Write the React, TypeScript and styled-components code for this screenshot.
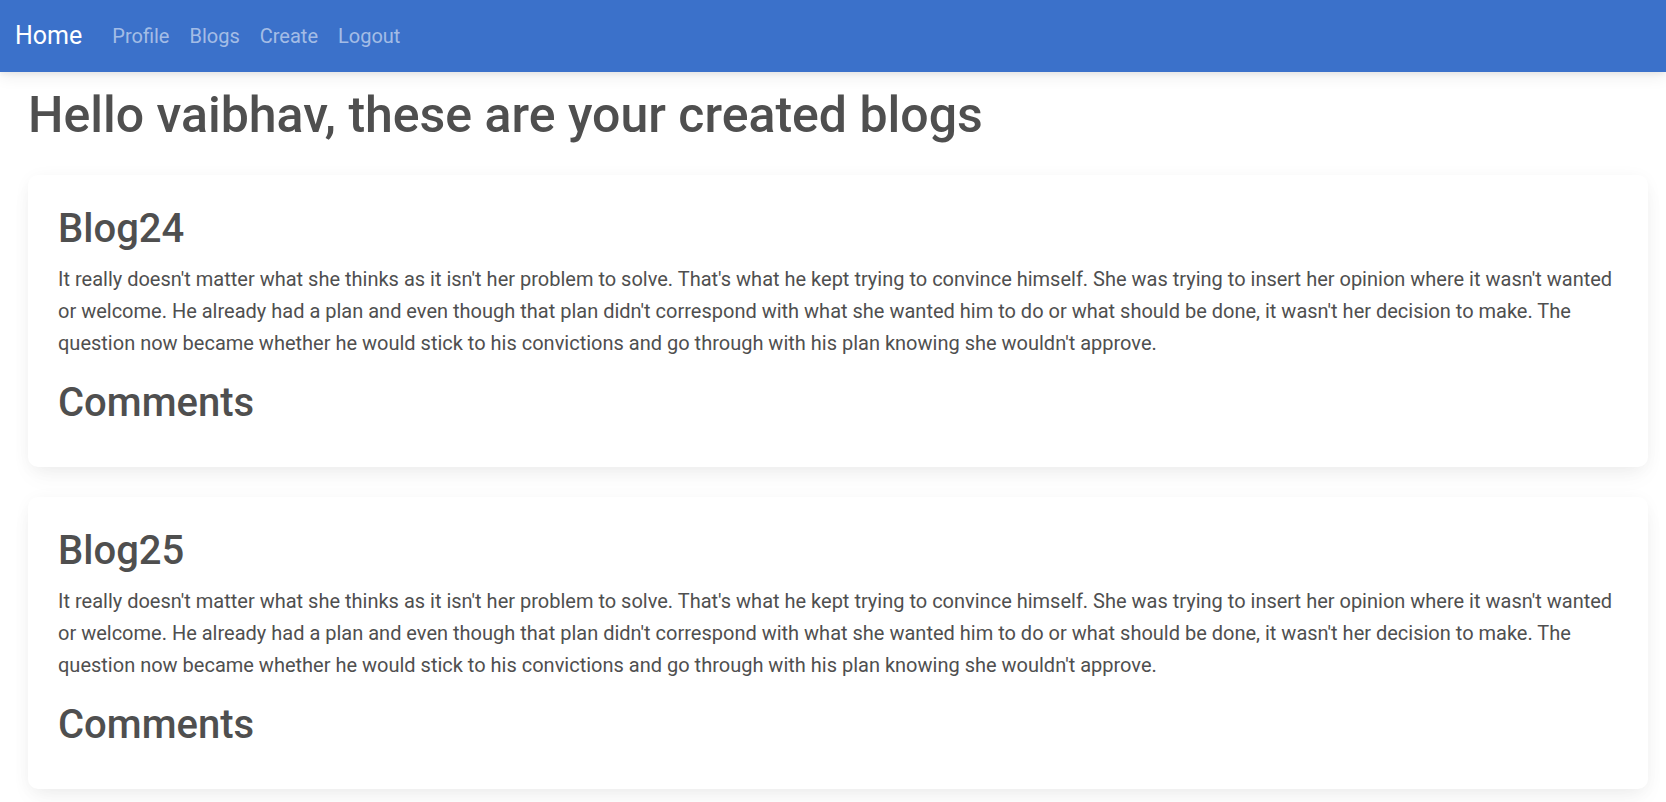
import React from "react";
import styled, { createGlobalStyle } from "styled-components";

const Global = createGlobalStyle`
  html, body { margin: 0; padding: 0; background: #fff; }
  body {
    font-family: Roboto, "Liberation Sans", sans-serif;
    color: #4f4f4f;
    font-size: 20px;
    line-height: 1.6;
  }
  * { box-sizing: border-box; }
`;

const Navbar = styled.nav`
  height: 72px;
  background: #3b71ca;
  display: flex;
  align-items: center;
  padding: 0 15px;
  box-shadow: 0 5px 15px 0 rgba(0, 0, 0, 0.07), 0 2.5px 5px 0 rgba(0, 0, 0, 0.05);
  position: relative;
  z-index: 1;
`;

const Brand = styled.a`
  color: #fff;
  font-size: 25px;
  line-height: 1.5;
  text-decoration: none;
  margin-right: 30px;
`;

const NavLinks = styled.div`
  display: flex;
  align-items: center;
  gap: 20px;
`;

const NavLink = styled.a`
  color: rgba(255, 255, 255, 0.55);
  font-size: 20px;
  line-height: 1.5;
  text-decoration: none;
`;

const Main = styled.main`
  padding: 13px 18px 30px 28px;
`;

const Title = styled.h1`
  font-size: 50px;
  font-weight: 500;
  line-height: 1.2;
  margin: 0 0 30px;
  color: #4f4f4f;
`;

const Card = styled.section`
  background: #fff;
  border-radius: 10px;
  padding: 30px 30px;
  margin-bottom: 30px;
  box-shadow: 0 2.5px 19px -4px rgba(0, 0, 0, 0.07), 0 12px 25px -3px rgba(0, 0, 0, 0.04);
`;

const CardTitle = styled.h2`
  font-size: 40px;
  font-weight: 500;
  line-height: 1.2;
  margin: 0 0 10px;
`;

const CardText = styled.p`
  margin: 0 0 20px;
  font-size: 20px;
  line-height: 32px;
`;

const text =
  "It really doesn't matter what she thinks as it isn't her problem to solve. That's what he kept trying to convince himself. She was trying to insert her opinion where it wasn't wanted or welcome. He already had a plan and even though that plan didn't correspond with what she wanted him to do or what should be done, it wasn't her decision to make. The question now became whether he would stick to his convictions and go through with his plan knowing she wouldn't approve.";

const blogs = [
  { title: "Blog24", body: text },
  { title: "Blog25", body: text },
];

export default function App() {
  return (
    <>
      <Global />
      <Navbar>
        <Brand href="#">Home</Brand>
        <NavLinks>
          <NavLink href="#">Profile</NavLink>
          <NavLink href="#">Blogs</NavLink>
          <NavLink href="#">Create</NavLink>
          <NavLink href="#">Logout</NavLink>
        </NavLinks>
      </Navbar>
      <Main>
        <Title>Hello vaibhav, these are your created blogs</Title>
        {blogs.map((b) => (
          <Card key={b.title}>
            <CardTitle>{b.title}</CardTitle>
            <CardText>{b.body}</CardText>
            <CardTitle>Comments</CardTitle>
          </Card>
        ))}
      </Main>
    </>
  );
}
